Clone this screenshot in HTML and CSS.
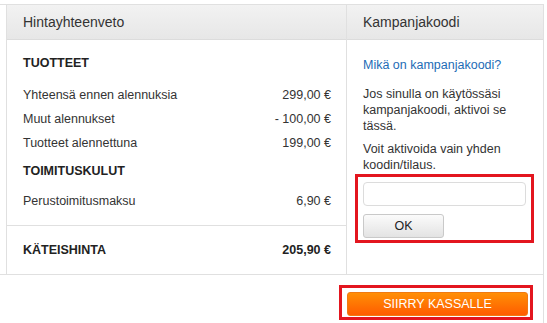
FILE: index.html
```html
<!DOCTYPE html>
<html lang="fi">
<head>
<meta charset="utf-8">
<link rel="stylesheet" href="styles.css">
</head>
<body>
<div class="page">
  <div class="summary">
    <div class="col col-left">
      <div class="head">Hintayhteenveto</div>
      <div class="body-left">
        <div class="sec sec-first">TUOTTEET</div>
        <div class="row"><span>Yhteensä ennen alennuksia</span><span>299,00 €</span></div>
        <div class="row"><span>Muut alennukset</span><span>- 100,00 €</span></div>
        <div class="row"><span>Tuotteet alennettuna</span><span>199,00 €</span></div>
        <div class="sec sec-second">TOIMITUSKULUT</div>
        <div class="row row-ship"><span>Perustoimitusmaksu</span><span>6,90 €</span></div>
      </div>
      <div class="total"><span>KÄTEISHINTA</span><span>205,90 €</span></div>
    </div>
    <div class="col col-right">
      <div class="head">Kampanjakoodi</div>
      <div class="body-right">
        <a class="link" href="#">Mikä on kampanjakoodi?</a>
        <p class="p1">Jos sinulla on käytössäsi kampanjakoodi, aktivoi se tässä.</p>
        <p class="p2">Voit aktivoida vain yhden koodin/tilaus.</p>
        <div class="mark mark-code">
          <input class="code" type="text">
          <button class="ok" type="button">OK</button>
        </div>
      </div>
    </div>
  </div>
  <div class="footer">
    <div class="mark mark-go">
      <button class="go" type="button">SIIRRY KASSALLE</button>
    </div>
  </div>
</div>
</body>
</html>
```
FILE: styles.css
```css
html, body {
  margin: 0;
  padding: 0;
  background: #fff;
}
body {
  font-family: "Liberation Sans", Arial, sans-serif;
  font-size: 12.5px;
  color: #333;
  width: 547px;
  height: 323px;
  overflow: hidden;
}
.page {
  margin-top: 4px;
  width: 543px;
  height: 319px;
  border-top: 1px solid #e0e0e0;
  border-right: 1px solid #e0e0e0;
}
.summary {
  display: flex;
  margin-left: 6px;
  border-left: 1px solid #e0e0e0;
}
.col-left {
  width: 339px;
  border-right: 1px solid #e0e0e0;
}
.col-right {
  flex: 1;
}
.head {
  height: 34px;
  line-height: 34px;
  padding-left: 16px;
  font-size: 14px;
  color: #333;
  background: linear-gradient(#f2f2f2, #e7e7e7);
  border-bottom: 1px solid #dcdcdc;
}
.body-left {
  padding: 15px 15px 12px 16px;
  border-bottom: 1px solid #e0e0e0;
}
.sec {
  font-weight: bold;
  line-height: 16px;
  color: #222;
}
.sec-first {
  margin-bottom: 12px;
}
.sec-second {
  margin-top: 8px;
}
.row {
  display: flex;
  justify-content: space-between;
  line-height: 24px;
}
.row-ship {
  margin-top: 10px;
}
.total {
  display: flex;
  justify-content: space-between;
  height: 48px;
  line-height: 48px;
  padding: 0 15px 0 16px;
  font-weight: bold;
  color: #222;
}
.body-right {
  padding: 17px 0 0 16px;
  height: 217px;
}
.link {
  display: block;
  line-height: 16px;
  color: #1d6cb6;
  text-decoration: none;
}
.body-right p {
  margin: 0;
  line-height: 16px;
  width: 166px;
}
.p1 {
  margin-top: 13px !important;
}
.p2 {
  margin-top: 7px !important;
}
.mark {
  border: 3px solid #e3161f;
  box-sizing: border-box;
}
.mark-code {
  margin: 1px 0 0 -8px;
  width: 179px;
  padding: 5px 4px 2px 5px;
  display: flex;
  flex-direction: column;
  align-items: flex-start;
  gap: 8px;
}
.code {
  box-sizing: border-box;
  width: 163px;
  height: 24px;
  margin: 0;
  border: 1px solid #dcdcdc;
  border-radius: 4px;
  background: #fff;
  outline: none;
}
.ok {
  box-sizing: border-box;
  width: 81px;
  height: 24px;
  margin: 0;
  padding: 0;
  border: 1px solid #c9c9c9;
  border-radius: 3px;
  background: linear-gradient(#fbfbfb, #e3e3e3);
  font-family: "Liberation Sans", Arial, sans-serif;
  font-size: 12.5px;
  color: #222;
}
.footer {
  border-top: 1px solid #e0e0e0;
  height: 48px;
  display: flex;
  justify-content: flex-end;
  align-items: flex-start;
}
.mark-go {
  margin: 10px 10px 0 0;
  padding: 4px 2px 1px 5px;
}
.go {
  box-sizing: border-box;
  width: 181px;
  height: 24px;
  margin: 0;
  padding: 0;
  border: 1px solid #f07a12;
  border-radius: 3px;
  background: linear-gradient(#ff8f06, #ff5c00);
  font-family: "Liberation Sans", Arial, sans-serif;
  font-size: 12.5px;
  color: #fff;
  display: block;
}
```
